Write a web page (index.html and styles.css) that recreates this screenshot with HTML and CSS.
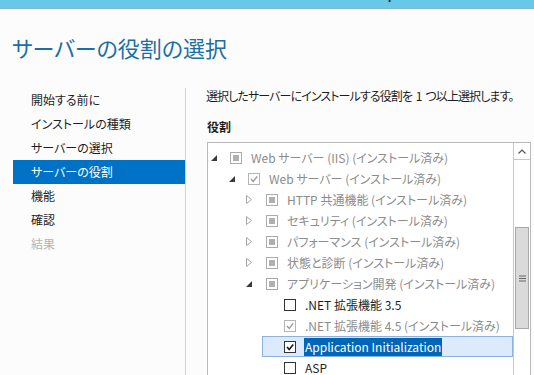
FILE: index.html
```html
<!DOCTYPE html>
<html lang="ja">
<head>
    <meta charset="UTF-8">
    <meta name="viewport" content="width=device-width, initial-scale=1.0">
    <title>役割と機能の追加ウィザード</title>
    <link rel="stylesheet" href="styles.css">
</head>
<body>
    <div class="titlebar">
        <span class="titlebar-text">WIN-SRV01.corp.contoso.local</span>
    </div>

    <h1 class="page-title">サーバーの役割の選択</h1>

    <div class="wizard">
        <ul class="steps">
            <li>開始する前に</li>
            <li>インストールの種類</li>
            <li>サーバーの選択</li>
            <li class="active">サーバーの役割</li>
            <li>機能</li>
            <li>確認</li>
            <li class="disabled">結果</li>
        </ul>

        <div class="content">
            <p class="intro">選択したサーバーにインストールする役割を 1 つ以上選択します。</p>
            <h2 class="section-label">役割</h2>

            <div class="tree-box">
                <div class="tree">
                    <div class="row lvl0 installed">
                        <div class="node">
                            <span class="exp"><svg width="6" height="6" viewBox="0 0 6 6"><polygon points="0,6 6,6 6,0" fill="#3a3a3a"/></svg></span>
                            <span class="cb partial"></span>
                            <span class="label">Web サーバー (IIS) (インストール済み)</span>
                        </div>
                    </div>
                    <div class="row lvl1 installed">
                        <div class="node">
                            <span class="exp"><svg width="6" height="6" viewBox="0 0 6 6"><polygon points="0,6 6,6 6,0" fill="#3a3a3a"/></svg></span>
                            <span class="cb checked-grey"><svg width="10" height="10" viewBox="0 0 10 10"><path d="M2 5 L4.2 7.4 L8.2 2.4" fill="none" stroke="#9a9a9a" stroke-width="1.4"/></svg></span>
                            <span class="label">Web サーバー (インストール済み)</span>
                        </div>
                    </div>
                    <div class="row lvl2 installed">
                        <div class="node">
                            <span class="exp"><svg width="6" height="9" viewBox="0 0 6 9"><polygon points="0.5,0.5 5.5,4.5 0.5,8.5" fill="none" stroke="#a6a6a6"/></svg></span>
                            <span class="cb partial"></span>
                            <span class="label">HTTP 共通機能 (インストール済み)</span>
                        </div>
                    </div>
                    <div class="row lvl2 installed">
                        <div class="node">
                            <span class="exp"><svg width="6" height="9" viewBox="0 0 6 9"><polygon points="0.5,0.5 5.5,4.5 0.5,8.5" fill="none" stroke="#a6a6a6"/></svg></span>
                            <span class="cb partial"></span>
                            <span class="label">セキュリティ (インストール済み)</span>
                        </div>
                    </div>
                    <div class="row lvl2 installed">
                        <div class="node">
                            <span class="exp"><svg width="6" height="9" viewBox="0 0 6 9"><polygon points="0.5,0.5 5.5,4.5 0.5,8.5" fill="none" stroke="#a6a6a6"/></svg></span>
                            <span class="cb partial"></span>
                            <span class="label">パフォーマンス (インストール済み)</span>
                        </div>
                    </div>
                    <div class="row lvl2 installed">
                        <div class="node">
                            <span class="exp"><svg width="6" height="9" viewBox="0 0 6 9"><polygon points="0.5,0.5 5.5,4.5 0.5,8.5" fill="none" stroke="#a6a6a6"/></svg></span>
                            <span class="cb partial"></span>
                            <span class="label">状態と診断 (インストール済み)</span>
                        </div>
                    </div>
                    <div class="row lvl2 installed">
                        <div class="node">
                            <span class="exp"><svg width="6" height="6" viewBox="0 0 6 6"><polygon points="0,6 6,6 6,0" fill="#3a3a3a"/></svg></span>
                            <span class="cb partial"></span>
                            <span class="label">アプリケーション開発 (インストール済み)</span>
                        </div>
                    </div>
                    <div class="row lvl3">
                        <div class="node">
                            <span class="exp"></span>
                            <span class="cb"></span>
                            <span class="label">.NET 拡張機能 3.5</span>
                        </div>
                    </div>
                    <div class="row lvl3 installed">
                        <div class="node">
                            <span class="exp"></span>
                            <span class="cb checked-grey"><svg width="10" height="10" viewBox="0 0 10 10"><path d="M2 5 L4.2 7.4 L8.2 2.4" fill="none" stroke="#9a9a9a" stroke-width="1.4"/></svg></span>
                            <span class="label">.NET 拡張機能 4.5 (インストール済み)</span>
                        </div>
                    </div>
                    <div class="row lvl3 selected">
                        <div class="node">
                            <span class="exp"></span>
                            <span class="cb"><svg width="10" height="10" viewBox="0 0 10 10"><path d="M2 5 L4.2 7.4 L8.2 2.4" fill="none" stroke="#1a1a1a" stroke-width="1.6"/></svg></span>
                            <span class="label">Application Initialization</span>
                        </div>
                    </div>
                    <div class="row lvl3">
                        <div class="node">
                            <span class="exp"></span>
                            <span class="cb"></span>
                            <span class="label">ASP</span>
                        </div>
                    </div>
                </div>

                <div class="scrollbar">
                    <div class="sb-button">
                        <svg width="8" height="5" viewBox="0 0 8 5"><path d="M0.5 4.5 L4 1 L7.5 4.5" fill="none" stroke="#555" stroke-width="1.2"/></svg>
                    </div>
                    <div class="sb-track">
                        <div class="sb-thumb">
                            <svg width="7" height="7" viewBox="0 0 7 7"><path d="M0 1 H7 M0 3.5 H7 M0 6 H7" stroke="#666" stroke-width="1"/></svg>
                        </div>
                    </div>
                </div>
            </div>
        </div>
    </div>
</body>
</html>
```

FILE: styles.css
```css
body {
    margin: 0;
    background-color: #fcfcfc;
    font-family: "Noto Sans CJK JP", "Noto Sans", sans-serif;
    font-size: 12px;
    color: #1e1e1e;
    overflow: hidden;
    height: 375px;
    font-feature-settings: "palt";
}
.titlebar {
    height: 8px;
    background-color: #68c8ea;
    border-bottom: 1px solid #8cb8cc;
    overflow: hidden;
    padding-left: 300px;
}
.titlebar-text {
    display: block;
    margin-top: -12px;
    line-height: 12px;
    font-size: 12px;
    font-weight: bold;
    color: #111111;
}
.page-title {
    margin: 23px 0 26px 12px;
    font-size: 22px;
    font-weight: normal;
    line-height: 30px;
    color: #1c6ea4;
}
.wizard {
    display: flex;
}
.steps {
    list-style: none;
    margin: 0;
    padding: 0 0 0 13px;
    width: 172px;
    border-right: 1px solid #d2d2d2;
    height: 300px;
}
.steps li {
    height: 24px;
    line-height: 24px;
    padding-left: 18px;
}
.steps li.active {
    background-color: #0072c6;
    color: #ffffff;
}
.steps li.disabled {
    color: #b4b4b4;
}
.content {
    flex: 1;
    min-width: 0;
    padding: 0 3px 0 20px;
}
.intro {
    margin: 0;
    line-height: 16px;
    white-space: nowrap;
    letter-spacing: -0.9px;
    word-spacing: 2px;
}
.section-label {
    margin: 15px 0 7px 1px;
    font-size: 12px;
    line-height: 16px;
    font-weight: bold;
}
.tree-box {
    display: flex;
    margin-left: 1px;
    height: 260px;
    border: 1px solid #b9b9b9;
    background-color: #ffffff;
}
.tree {
    flex: 1;
    padding-top: 4px;
}
.row {
    display: flex;
    height: 21px;
}
.lvl1 { padding-left: 18px; }
.lvl2 { padding-left: 36px; }
.lvl3 { padding-left: 54px; }
.node {
    display: flex;
    align-items: center;
    flex: 1;
    height: 19px;
    border: 1px solid transparent;
}
.exp {
    width: 19px;
    display: flex;
    align-items: center;
    padding-left: 2px;
}
.lvl2 .exp, .lvl3 .exp {
    padding-left: 1px;
    width: 20px;
}
.cb {
    width: 10px;
    height: 10px;
    border: 1px solid #333333;
    background-color: #ffffff;
    display: flex;
    align-items: center;
    justify-content: center;
    margin-right: 8px;
    flex-shrink: 0;
}
.cb.partial {
    border-color: #ababab;
}
.cb.partial::after {
    content: "";
    width: 6px;
    height: 6px;
    background-color: #b0b0b0;
}
.cb.checked-grey {
    border-color: #b4b4b4;
}
.label {
    white-space: nowrap;
    line-height: 18px;
    padding: 0 1px;
}
.installed .label {
    color: #8c8c8c;
}
.selected .node {
    background-color: #dcebfc;
    border-color: #8db2e0;
}
.selected .label {
    background-color: #0066b8;
    color: #ffffff;
}
.scrollbar {
    width: 16px;
    border-left: 1px solid #c8c8c8;
    display: flex;
    flex-direction: column;
}
.sb-button {
    height: 16px;
    border-bottom: 1px solid #c8c8c8;
    display: flex;
    align-items: center;
    justify-content: center;
}
.sb-track {
    flex: 1;
    padding-top: 67px;
}
.sb-thumb {
    height: 100px;
    margin: 0 1px;
    background-color: #dadada;
    border: 1px solid #a8a8a8;
    display: flex;
    align-items: center;
    justify-content: center;
}
```
